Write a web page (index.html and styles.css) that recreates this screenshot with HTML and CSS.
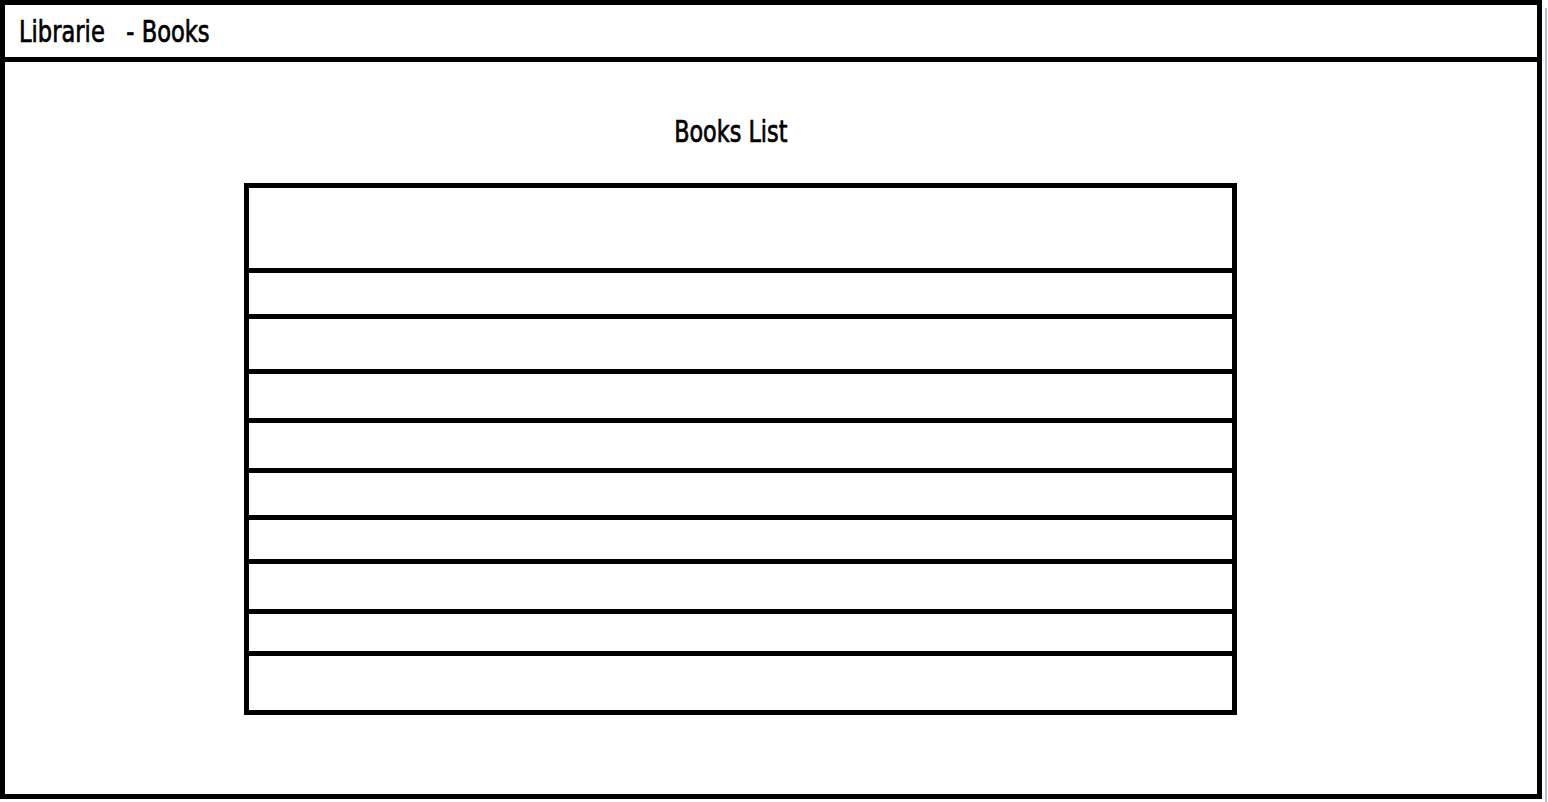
FILE: index.html
```html
<!DOCTYPE html>
<html>
<head>
<meta charset="utf-8">
<title>Librarie - Books</title>
<link rel="stylesheet" href="styles.css">
</head>
<body>
<div class="screen">
  <div class="frame">
    <header class="topbar"><span class="topbar-text">Librarie &nbsp;&nbsp;- Books</span></header>
    <main class="content">
      <div class="title-wrap"><h1 class="title">Books List</h1></div>
      <div class="books-table">
        <div class="row row-head"></div>
        <div class="row r2"></div>
        <div class="row r3"></div>
        <div class="row r4"></div>
        <div class="row r5"></div>
        <div class="row r6"></div>
        <div class="row r7"></div>
        <div class="row r8"></div>
        <div class="row r9"></div>
        <div class="row r10"></div>
      </div>
    </main>
  </div>
  <div class="edge"></div>
</div>
</body>
</html>
```

FILE: styles.css
```css
html, body {
  margin: 0;
  padding: 0;
  background: #ffffff;
}

body {
  font-family: "DejaVu Sans Condensed", "DejaVu Sans", sans-serif;
  color: #000;
}

.screen {
  display: flex;
  width: 1548px;
  height: 802px;
  overflow: hidden;
}

.frame {
  box-sizing: border-box;
  width: 1542px;
  height: 799px;
  border: 5px solid #000;
  display: flex;
  flex-direction: column;
}

.edge {
  width: 2px;
  height: 794px;
  margin-left: 3px;
  margin-top: 8px;
  background: #b4bfd2;
}

.topbar {
  box-sizing: border-box;
  height: 57px;
  border-bottom: 5px solid #000;
  padding-left: 14px;
  font-size: 31px;
  line-height: 53px;
  white-space: pre;
}

.topbar-text {
  display: inline-block;
  transform: scaleX(0.81);
  transform-origin: left center;
  -webkit-text-stroke: 0.7px #000;
}

.content {
  flex: 1;
}

.title-wrap {
  margin-top: 52px;
  padding-right: 80px;
  text-align: center;
  height: 34px;
}

.title {
  display: inline-block;
  margin: 0;
  font-size: 31px;
  font-weight: normal;
  line-height: 34px;
  transform: scaleX(0.8);
  -webkit-text-stroke: 0.7px #000;
}

.books-table {
  box-sizing: border-box;
  width: 993px;
  margin: 35px 0 0 239px;
  border: 5px solid #000;
  display: flex;
  flex-direction: column;
}

.row {
  border-top: 5px solid #000;
}

.row-head { border-top: none; height: 80px; }
.r2 { height: 41px; }
.r3 { height: 50px; }
.r4 { height: 44px; }
.r5 { height: 45px; }
.r6 { height: 42px; }
.r7 { height: 39px; }
.r8 { height: 45px; }
.r9 { height: 37px; }
.r10 { height: 54px; }
```
